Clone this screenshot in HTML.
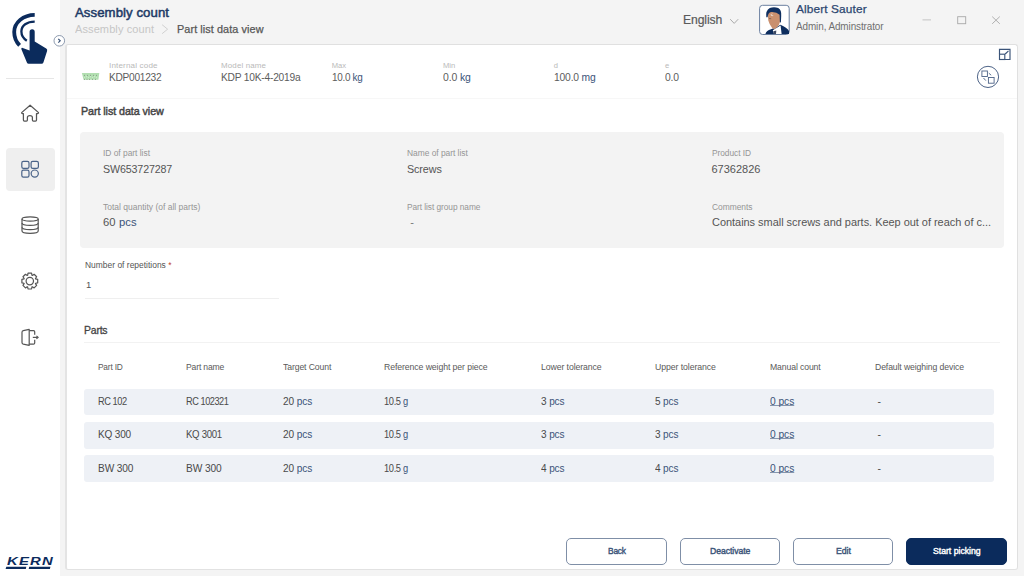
<!DOCTYPE html>
<html><head><meta charset="utf-8">
<style>
*{box-sizing:border-box;margin:0;padding:0}
html,body{width:1024px;height:576px;overflow:hidden;background:#f4f4f4;font-family:"Liberation Sans",sans-serif;color:#555}
.t{position:absolute;white-space:nowrap;line-height:1}
.a{position:absolute}
#side{position:absolute;left:0;top:0;width:60px;height:576px;background:#fff}
#card{position:absolute;left:65px;top:44px;width:953px;height:526px;background:#fff;border:1px solid #e0e0e0;border-left:2px solid #e4e4e4;border-bottom:1.5px solid #e2e2e2;border-radius:3px}
.box{position:absolute;left:80px;top:131.5px;width:924px;height:116px;background:#f3f3f3;border-radius:4px}
.row{position:absolute;left:84.4px;width:909.5px;height:26.5px;background:#eef1f6;border-radius:3px}
.btn{position:absolute;top:537.6px;height:27.2px;border:1.1px solid #7f8fa7;border-radius:5px;background:#fff}
svg{position:absolute;overflow:visible}
</style></head><body>
<div id="side"></div>
<div id="card"></div>
<div class="a" style="left:67px;top:98px;width:950px;height:1px;background:#f7f7f7"></div>
<div class="box"></div>
<div class="a" style="left:85px;top:297.5px;width:194px;height:1px;background:#efefef"></div>
<div class="a" style="left:84px;top:342px;width:916px;height:1px;background:#f2f2f2"></div>
<div class="row" style="top:388.8px"></div>
<div class="row" style="top:422px"></div>
<div class="row" style="top:455.4px"></div>
<div class="btn" style="left:566.3px;width:100.8px"></div>
<div class="btn" style="left:680px;width:99.8px"></div>
<div class="btn" style="left:793.4px;width:100px"></div>
<div class="btn" style="left:906.3px;width:100.3px;background:#0b2b5c;border-color:#0b2b5c"></div>
<!-- active nav bg -->
<div class="a" style="left:6px;top:148px;width:48.6px;height:42.5px;background:#efefef;border-radius:4px"></div>
<!-- sidebar separator -->
<div class="a" style="left:6px;top:77.6px;width:48px;height:1px;background:#e6e6e6"></div>

<svg width="1024" height="576" style="left:0;top:0" viewBox="0 0 1024 576">
 <!-- logo -->
 <g fill="none" stroke="#0b2b5c" stroke-linecap="butt">
  <path d="M34.7,14.8 C23.3,14.8 14.2,22.6 14.2,31.9 C14.2,37.4 16.2,41.8 19.6,45.4" stroke-width="3.8"/>
  <path d="M34.7,21.6 C27,21.6 21.4,25.5 21.4,31.5 C21.4,35.5 23.5,38.6 26.8,40.7" stroke-width="2.3"/>
 </g>
 <path fill="#0b2b5c" d="M29.6,31.8 A2.55,2.55 0 0 1 34.7,31.8 L34.7,41.5 L46.2,48.6 Q47.6,49.5 47.1,51 L43.4,62.6 Q42.9,63.8 41.6,63.8 L28.6,63.8 Q27.4,63.8 27,62.7 L21.4,49.2 Q21,47.6 22.7,47.9 L29.6,50.6 Z"/>
 <!-- collapse circle -->
 <circle cx="59.3" cy="40.8" r="5.3" fill="#fff" stroke="#8190a6" stroke-width="0.9"/>
 <path d="M58.3,38.9 L60.2,40.8 L58.3,42.7" fill="none" stroke="#3b5479" stroke-width="1.2"/>
 <!-- home -->
 <path fill="none" stroke="#555" stroke-width="1.25" stroke-linejoin="round" d="M30.1,105.2 L38.3,112.4 Q38.9,113.3 37.9,113.5 L36.5,113.5 L36.5,120 Q36.5,121 35.5,121 L33.4,121 Q32.4,121 32.4,120 L32.4,117.6 Q32.4,115.6 29.9,115.6 Q27.4,115.6 27.4,117.6 L27.4,120 Q27.4,121 26.4,121 L24.4,121 Q23.4,121 23.4,120 L23.4,113.5 L22.2,113.5 Q21.2,113.3 21.9,112.4 Z"/>
 <!-- apps -->
 <g fill="none" stroke="#4a6388" stroke-width="1.2">
  <rect x="21.8" y="161.3" width="7.2" height="7" rx="1.6"/>
  <rect x="31.1" y="161.3" width="7.3" height="7" rx="1.6"/>
  <rect x="21.8" y="170.1" width="7.2" height="7" rx="1.6"/>
  <circle cx="34.75" cy="173.6" r="3.6"/>
 </g>
 <!-- database -->
 <g fill="none" stroke="#555" stroke-width="1.2">
  <ellipse cx="30.1" cy="219.0" rx="8.1" ry="2.1"/>
  <path d="M22,219 L22,231 Q22,233.3 30.1,233.3 Q38.2,233.3 38.2,231 L38.2,219"/>
  <path d="M22,223 Q22,225.4 30.1,225.4 Q38.2,225.4 38.2,223"/>
  <path d="M22,227.2 Q22,229.6 30.1,229.6 Q38.2,229.6 38.2,227.2"/>
 </g>
 <!-- gear -->
 <g fill="none" stroke="#555" stroke-width="1.2" stroke-linejoin="round">
  <path d="M27.62,275.30 L28.03,273.20 L31.57,273.20 L31.98,275.30 L32.36,275.45 L34.14,274.26 L36.64,276.76 L35.45,278.54 L35.60,278.92 L37.70,279.33 L37.70,282.87 L35.60,283.28 L35.45,283.66 L36.64,285.44 L34.14,287.94 L32.36,286.75 L31.98,286.90 L31.57,289.00 L28.03,289.00 L27.62,286.90 L27.24,286.75 L25.46,287.94 L22.96,285.44 L24.15,283.66 L24.00,283.28 L21.90,282.87 L21.90,279.33 L24.00,278.92 L24.15,278.54 L22.96,276.76 L25.46,274.26 L27.24,275.45 Z"/>
  <circle cx="29.8" cy="281.1" r="3.7"/>
 </g>
 <!-- exit -->
 <g fill="none" stroke="#555" stroke-width="1.2" stroke-linejoin="round">
  <path d="M29.2,329.4 L23.3,330.6 Q22,330.9 22,332.2 L22,342.6 Q22,343.9 23.3,344.2 L29.2,345.4 Z"/>
  <path d="M29.2,330.6 L33.5,330.6 Q34.7,330.6 34.7,331.8 L34.7,334.8"/>
  <path d="M34.7,339.8 L34.7,342.9 Q34.7,344.1 33.5,344.1 L29.2,344.1"/>
  <path d="M32.8,337.4 L37.6,337.4"/>
  <path d="M36.4,335.9 L38.2,337.4 L36.4,338.9" />
 </g>
 <!-- KERN underline bars -->
 <path fill="#0b2b5c" d="M6.3,566.8 L26.3,566.8 L25.8,569.1 L5.6,569.1 Z M29.2,566.8 L50.4,566.8 L49.9,569.1 L28.7,569.1 Z"/>
 <!-- breadcrumb chevron -->
 <path d="M162.1,24.7 L167.6,29.2 L162.1,33.7" fill="none" stroke="#c8c8c8" stroke-width="0.8"/>
 <!-- language chevron -->
 <path d="M730.2,19.2 L734.2,23.4 L738.2,19.2" fill="none" stroke="#a0a0a0" stroke-width="0.9"/>
 <!-- avatar -->
 <rect x="759.6" y="5.3" width="29.6" height="29.2" rx="3" fill="#fff" stroke="#6a7f9f" stroke-width="1"/>
 <g>
  <path fill="#0d2d5e" d="M765.4,33.9 Q766.5,30.5 771,29.3 L775.5,27.5 L780.5,24.8 Q787,27.5 789,31 L789,33.9 Z"/>
  <path fill="#c9906f" d="M767.6,12.5 Q768,9.5 773.5,9 Q779.5,9.5 780.4,13 L780.4,20 Q779.8,25 776,28.3 Q774.5,29.8 772.3,28.3 Q769.3,24.5 768.3,20.5 Z"/>
  <path fill="#fff" d="M772.8,30.2 L780.6,25.6 L781.6,33.9 L774,33.9 Z"/>
  <path fill="#3d4a62" d="M773.4,31.2 L776.3,30.6 L776,33.9 L773.6,33.9 Z"/>
  <path fill="#0f2f60" d="M766.3,17.2 Q765.4,10.5 769.8,8 Q774,6.3 778.2,8 Q781.8,10.2 781.2,16 L780.9,22.6 L779.9,22.2 L779.6,14.8 Q776.5,11.6 771.2,12 Q768,12.6 767.6,17.2 Z"/>
  <path fill="none" stroke="#f0f0f0" stroke-width="0.6" d="M772.2,13.5 L770.8,15 L772.3,15.8 M771.5,15.3 L773.2,15.5"/>
  <path fill="none" stroke="#5a4a46" stroke-width="0.6" d="M769,18.5 L771.2,18.7"/>
 </g>
 <!-- window controls -->
 <path d="M922.5,19.9 L931,19.9" stroke="#bdbdbd" stroke-width="0.9"/>
 <rect x="957.7" y="16.7" width="8" height="7" fill="none" stroke="#a8a8a8" stroke-width="0.9"/>
  <path d="M992.2,16.6 L999.8,23.8 M999.8,16.6 L992.2,23.8" stroke="#a8a8a8" stroke-width="0.9"/>
 <!-- green connector -->
 <path fill="#b2dfb1" d="M81.9,73 L99.3,73 L98.4,79.8 L83.6,79.8 Z"/>
 <g fill="#7a8a7a">
  <circle cx="84.5" cy="75.2" r="0.5"/><circle cx="87.5" cy="75.2" r="0.5"/><circle cx="90.5" cy="75.2" r="0.5"/><circle cx="93.5" cy="75.2" r="0.5"/><circle cx="96.5" cy="75.2" r="0.5"/>
  <circle cx="84.5" cy="79.2" r="0.5"/><circle cx="87" cy="79.2" r="0.5"/><circle cx="89.5" cy="79.2" r="0.5"/><circle cx="92.5" cy="79.2" r="0.5"/><circle cx="95.5" cy="79.2" r="0.5"/>
 </g>
 <g fill="#f3fbf3">
  <circle cx="84.5" cy="77.4" r="0.45"/><circle cx="86.5" cy="76.7" r="0.45"/><circle cx="88.5" cy="77.4" r="0.45"/><circle cx="90.5" cy="76.7" r="0.45"/><circle cx="92.5" cy="77.4" r="0.45"/><circle cx="94.5" cy="76.7" r="0.45"/><circle cx="96.5" cy="77.4" r="0.45"/>
 </g>
 <!-- expand icon -->
 <g fill="none" stroke="#3b5479" stroke-width="1.15">
  <path d="M999.5,54 L999.5,49.4 L1010,49.4 L1010,59.5 L1005,59.5"/>
  <rect x="999.5" y="54.2" width="5.3" height="5.3"/>
  <path d="M1005.2,54 L1008.5,50.8"/>
 </g>
 <!-- circle swap icon -->
 <circle cx="988" cy="76.9" r="10.6" fill="none" stroke="#4d6387" stroke-width="1"/>
 <g fill="none" stroke="#4d6387" stroke-width="0.9">
  <rect x="981.9" y="71" width="5.5" height="5.5"/>
  <rect x="988.4" y="77.5" width="5.7" height="5.7"/>
  <path d="M988.8,73.2 L991.2,75.2 M983.5,78 L985.8,80.6"/>
 </g>
</svg>
<div class="t" id="kern" style="left:6.5px;top:556.2px;font-size:10.6px;font-weight:bold;font-style:italic;color:#0b2b5c;letter-spacing:0.9px;transform:scaleX(1.4);transform-origin:0 0">KERN</div>
<div class="t" style="left:74.60px;top:6.30px;font-size:13px;color:#1d3a66;letter-spacing:0.068px;transform:scaleX(1.0145);transform-origin:0 0;-webkit-text-stroke:0.5px #1d3a66;">Assembly count</div>
<div class="t" style="left:74.60px;top:23.90px;font-size:10.8px;color:#c6c6c6;letter-spacing:0.085px;transform:scaleX(1.0217);transform-origin:0 0;">Assembly count</div>
<div class="t" style="left:176.60px;top:24.00px;font-size:10.6px;color:#575757;letter-spacing:0.076px;transform:scaleX(1.0249);transform-origin:0 0;-webkit-text-stroke:0.25px #575757;">Part list data view</div>
<div class="t" style="left:682.60px;top:14.05px;font-size:12.5px;color:#5a5a5a;letter-spacing:-0.122px;transform:scaleX(0.9734);transform-origin:0 0;-webkit-text-stroke:0.2px #5a5a5a;">English</div>
<div class="t" style="left:796.40px;top:3.55px;font-size:11.5px;color:#2c4670;letter-spacing:0.114px;transform:scaleX(1.0307);transform-origin:0 0;-webkit-text-stroke:0.25px #2c4670;">Albert Sauter</div>
<div class="t" style="left:796.40px;top:21.70px;font-size:10.2px;color:#6f6f6f;letter-spacing:-0.093px;transform:scaleX(0.9727);transform-origin:0 0;">Admin, Adminstrator</div>
<div class="t" style="left:109.40px;top:62.00px;font-size:7.6px;color:#b9b9b9;letter-spacing:0.149px;transform:scaleX(1.0615);transform-origin:0 0;">Internal code</div>
<div class="t" style="left:220.70px;top:62.00px;font-size:7.6px;color:#b9b9b9;letter-spacing:0.139px;transform:scaleX(1.0453);transform-origin:0 0;">Model name</div>
<div class="t" style="left:331.70px;top:62.00px;font-size:7.6px;color:#b9b9b9;">Max</div>
<div class="t" style="left:443.00px;top:62.00px;font-size:7.6px;color:#b9b9b9;">Min</div>
<div class="t" style="left:553.75px;top:62.00px;font-size:7.6px;color:#b9b9b9;">d</div>
<div class="t" style="left:665.00px;top:62.00px;font-size:7.6px;color:#b9b9b9;">e</div>
<div class="t" style="left:109.40px;top:71.90px;font-size:10.8px;color:#5c5c5c;letter-spacing:-0.290px;transform:scaleX(0.9408);transform-origin:0 0;">KDP001232</div>
<div class="t" style="left:220.70px;top:71.90px;font-size:10.8px;color:#5c5c5c;letter-spacing:-0.227px;transform:scaleX(0.9459);transform-origin:0 0;">KDP 10K-4-2019a</div>
<div class="t" style="left:331.70px;top:71.90px;font-size:10.8px;color:#5c5c5c;letter-spacing:-0.321px;transform:scaleX(0.9195);transform-origin:0 0;">10.0 <span style="color:#3b5479">kg</span></div>
<div class="t" style="left:443.00px;top:71.90px;font-size:10.8px;color:#5c5c5c;letter-spacing:-0.132px;transform:scaleX(0.9666);transform-origin:0 0;">0.0 <span style="color:#3b5479">kg</span></div>
<div class="t" style="left:553.75px;top:71.90px;font-size:10.8px;color:#5c5c5c;letter-spacing:-0.195px;transform:scaleX(0.9549);transform-origin:0 0;">100.0 <span style="color:#3b5479">mg</span></div>
<div class="t" style="left:665.00px;top:71.90px;font-size:10.8px;color:#5c5c5c;letter-spacing:-0.207px;transform:scaleX(0.9589);transform-origin:0 0;">0.0</div>
<div class="t" style="left:80.50px;top:105.80px;font-size:11px;color:#454545;letter-spacing:-0.077px;transform:scaleX(0.9761);transform-origin:0 0;-webkit-text-stroke:0.45px #454545;">Part list data view</div>
<div class="t" style="left:103.00px;top:149.05px;font-size:8.5px;color:#959595;letter-spacing:-0.021px;transform:scaleX(0.9909);transform-origin:0 0;">ID of part list</div>
<div class="t" style="left:407.10px;top:149.05px;font-size:8.5px;color:#959595;letter-spacing:-0.027px;transform:scaleX(0.9894);transform-origin:0 0;">Name of part list</div>
<div class="t" style="left:711.50px;top:149.05px;font-size:8.5px;color:#959595;letter-spacing:-0.052px;transform:scaleX(0.9826);transform-origin:0 0;">Product ID</div>
<div class="t" style="left:103.00px;top:163.80px;font-size:11px;color:#555;letter-spacing:-0.141px;transform:scaleX(0.9710);transform-origin:0 0;">SW653727287</div>
<div class="t" style="left:407.10px;top:163.80px;font-size:11px;color:#555;letter-spacing:-0.102px;transform:scaleX(0.9788);transform-origin:0 0;">Screws</div>
<div class="t" style="left:711.50px;top:163.80px;font-size:11px;color:#555;">67362826</div>
<div class="t" style="left:103.00px;top:203.05px;font-size:8.5px;color:#959595;">Total quantity (of all parts)</div>
<div class="t" style="left:407.10px;top:203.05px;font-size:8.5px;color:#959595;letter-spacing:-0.057px;transform:scaleX(0.9787);transform-origin:0 0;">Part list group name</div>
<div class="t" style="left:711.50px;top:203.05px;font-size:8.5px;color:#959595;letter-spacing:-0.034px;transform:scaleX(0.9913);transform-origin:0 0;">Comments</div>
<div class="t" style="left:103.00px;top:216.80px;font-size:11px;color:#555;letter-spacing:0.093px;transform:scaleX(1.0216);transform-origin:0 0;">60 <span style="color:#3b5479">pcs</span></div>
<div class="t" style="left:410.20px;top:216.80px;font-size:11px;color:#777;">-</div>
<div class="t" style="left:711.50px;top:216.80px;font-size:11px;color:#555;letter-spacing:-0.016px;transform:scaleX(0.9952);transform-origin:0 0;">Contains small screws and parts. Keep out of reach of c...</div>
<div class="t" style="left:85.20px;top:261.10px;font-size:8.4px;color:#555;letter-spacing:0.015px;transform:scaleX(1.0058);transform-origin:0 0;">Number of repetitions <span style="color:#c0392b">*</span></div>
<div class="t" style="left:86.00px;top:280.05px;font-size:9.5px;color:#555;">1</div>
<div class="t" style="left:83.70px;top:324.80px;font-size:11px;color:#444;letter-spacing:-0.214px;transform:scaleX(0.9504);transform-origin:0 0;-webkit-text-stroke:0.3px #444;">Parts</div>
<div class="t" style="left:97.60px;top:362.80px;font-size:9px;color:#5a5a5a;letter-spacing:-0.222px;transform:scaleX(0.9295);transform-origin:0 0;">Part ID</div>
<div class="t" style="left:186.10px;top:362.80px;font-size:9px;color:#5a5a5a;letter-spacing:-0.160px;transform:scaleX(0.9541);transform-origin:0 0;">Part name</div>
<div class="t" style="left:282.70px;top:362.80px;font-size:9px;color:#5a5a5a;letter-spacing:-0.120px;transform:scaleX(0.9619);transform-origin:0 0;">Target Count</div>
<div class="t" style="left:384.30px;top:362.80px;font-size:9px;color:#5a5a5a;letter-spacing:-0.097px;transform:scaleX(0.9669);transform-origin:0 0;">Reference weight per piece</div>
<div class="t" style="left:541.10px;top:362.80px;font-size:9px;color:#5a5a5a;letter-spacing:-0.097px;transform:scaleX(0.9683);transform-origin:0 0;">Lower tolerance</div>
<div class="t" style="left:655.40px;top:362.80px;font-size:9px;color:#5a5a5a;letter-spacing:-0.091px;transform:scaleX(0.9702);transform-origin:0 0;">Upper tolerance</div>
<div class="t" style="left:770.30px;top:362.80px;font-size:9px;color:#5a5a5a;letter-spacing:-0.124px;transform:scaleX(0.9624);transform-origin:0 0;">Manual count</div>
<div class="t" style="left:874.70px;top:362.80px;font-size:9px;color:#5a5a5a;letter-spacing:-0.112px;transform:scaleX(0.9612);transform-origin:0 0;">Default weighing device</div>
<div class="t" style="left:97.60px;top:396.60px;font-size:10.4px;color:#4a4a4a;letter-spacing:-0.519px;transform:scaleX(0.8916);transform-origin:0 0;">RC 102</div>
<div class="t" style="left:186.10px;top:396.60px;font-size:10.4px;color:#4a4a4a;letter-spacing:-0.514px;transform:scaleX(0.8851);transform-origin:0 0;">RC 102321</div>
<div class="t" style="left:282.70px;top:396.60px;font-size:10.4px;color:#4a4a4a;letter-spacing:-0.116px;transform:scaleX(0.9718);transform-origin:0 0;">20 <span style="color:#3b5479">pcs</span></div>
<div class="t" style="left:384.30px;top:396.60px;font-size:10.4px;color:#4a4a4a;letter-spacing:-0.406px;transform:scaleX(0.8966);transform-origin:0 0;">10.5 <span style="color:#3b5479">g</span></div>
<div class="t" style="left:541.10px;top:396.60px;font-size:10.4px;color:#4a4a4a;letter-spacing:-0.137px;transform:scaleX(0.9672);transform-origin:0 0;">3 <span style="color:#3b5479">pcs</span></div>
<div class="t" style="left:655.40px;top:396.60px;font-size:10.4px;color:#4a4a4a;letter-spacing:-0.147px;transform:scaleX(0.9647);transform-origin:0 0;">5 <span style="color:#3b5479">pcs</span></div>
<div class="t" style="left:770.30px;top:396.60px;font-size:10.4px;color:#3b5479;letter-spacing:-0.055px;transform:scaleX(0.9868);transform-origin:0 0;text-decoration:underline;text-decoration-color:#8595ad;text-underline-offset:0px;text-decoration-thickness:0.8px;text-decoration-skip-ink:none;">0 pcs</div>
<div class="t" style="left:877.50px;top:396.60px;font-size:10.4px;color:#4a4a4a;">-</div>
<div class="t" style="left:97.60px;top:429.60px;font-size:10.4px;color:#4a4a4a;letter-spacing:-0.167px;transform:scaleX(0.9647);transform-origin:0 0;">KQ 300</div>
<div class="t" style="left:186.10px;top:429.60px;font-size:10.4px;color:#4a4a4a;letter-spacing:-0.340px;transform:scaleX(0.9263);transform-origin:0 0;">KQ 3001</div>
<div class="t" style="left:282.70px;top:429.60px;font-size:10.4px;color:#4a4a4a;letter-spacing:-0.116px;transform:scaleX(0.9718);transform-origin:0 0;">20 <span style="color:#3b5479">pcs</span></div>
<div class="t" style="left:384.30px;top:429.60px;font-size:10.4px;color:#4a4a4a;letter-spacing:-0.406px;transform:scaleX(0.8966);transform-origin:0 0;">10.5 <span style="color:#3b5479">g</span></div>
<div class="t" style="left:541.10px;top:429.60px;font-size:10.4px;color:#4a4a4a;letter-spacing:-0.137px;transform:scaleX(0.9672);transform-origin:0 0;">3 <span style="color:#3b5479">pcs</span></div>
<div class="t" style="left:655.40px;top:429.60px;font-size:10.4px;color:#4a4a4a;letter-spacing:-0.147px;transform:scaleX(0.9647);transform-origin:0 0;">3 <span style="color:#3b5479">pcs</span></div>
<div class="t" style="left:770.30px;top:429.60px;font-size:10.4px;color:#3b5479;letter-spacing:-0.055px;transform:scaleX(0.9868);transform-origin:0 0;text-decoration:underline;text-decoration-color:#8595ad;text-underline-offset:0px;text-decoration-thickness:0.8px;text-decoration-skip-ink:none;">0 pcs</div>
<div class="t" style="left:877.50px;top:429.60px;font-size:10.4px;color:#4a4a4a;">-</div>
<div class="t" style="left:97.60px;top:463.60px;font-size:10.4px;color:#4a4a4a;letter-spacing:-0.127px;transform:scaleX(0.9743);transform-origin:0 0;">BW 300</div>
<div class="t" style="left:186.10px;top:463.60px;font-size:10.4px;color:#4a4a4a;letter-spacing:-0.103px;transform:scaleX(0.9793);transform-origin:0 0;">BW 300</div>
<div class="t" style="left:282.70px;top:463.60px;font-size:10.4px;color:#4a4a4a;letter-spacing:-0.116px;transform:scaleX(0.9718);transform-origin:0 0;">20 <span style="color:#3b5479">pcs</span></div>
<div class="t" style="left:384.30px;top:463.60px;font-size:10.4px;color:#4a4a4a;letter-spacing:-0.406px;transform:scaleX(0.8966);transform-origin:0 0;">10.5 <span style="color:#3b5479">g</span></div>
<div class="t" style="left:541.10px;top:463.60px;font-size:10.4px;color:#4a4a4a;letter-spacing:-0.137px;transform:scaleX(0.9672);transform-origin:0 0;">4 <span style="color:#3b5479">pcs</span></div>
<div class="t" style="left:655.40px;top:463.60px;font-size:10.4px;color:#4a4a4a;letter-spacing:-0.147px;transform:scaleX(0.9647);transform-origin:0 0;">4 <span style="color:#3b5479">pcs</span></div>
<div class="t" style="left:770.30px;top:463.60px;font-size:10.4px;color:#3b5479;letter-spacing:-0.055px;transform:scaleX(0.9868);transform-origin:0 0;text-decoration:underline;text-decoration-color:#8595ad;text-underline-offset:0px;text-decoration-thickness:0.8px;text-decoration-skip-ink:none;">0 pcs</div>
<div class="t" style="left:877.50px;top:463.60px;font-size:10.4px;color:#4a4a4a;">-</div>
<div class="t" style="left:607.60px;top:546.90px;font-size:8.8px;color:#3b5479;letter-spacing:-0.214px;transform:scaleX(0.9513);transform-origin:0 0;-webkit-text-stroke:0.4px #3b5479;">Back</div>
<div class="t" style="left:709.50px;top:546.90px;font-size:8.8px;color:#3b5479;letter-spacing:-0.057px;transform:scaleX(0.9817);transform-origin:0 0;-webkit-text-stroke:0.4px #3b5479;">Deactivate</div>
<div class="t" style="left:836.00px;top:546.90px;font-size:8.8px;color:#3b5479;letter-spacing:-0.050px;transform:scaleX(0.9852);transform-origin:0 0;-webkit-text-stroke:0.4px #3b5479;">Edit</div>
<div class="t" style="left:932.80px;top:546.90px;font-size:8.8px;color:#ffffff;letter-spacing:-0.027px;transform:scaleX(0.9900);transform-origin:0 0;-webkit-text-stroke:0.4px #ffffff;">Start picking</div>
</body></html>
